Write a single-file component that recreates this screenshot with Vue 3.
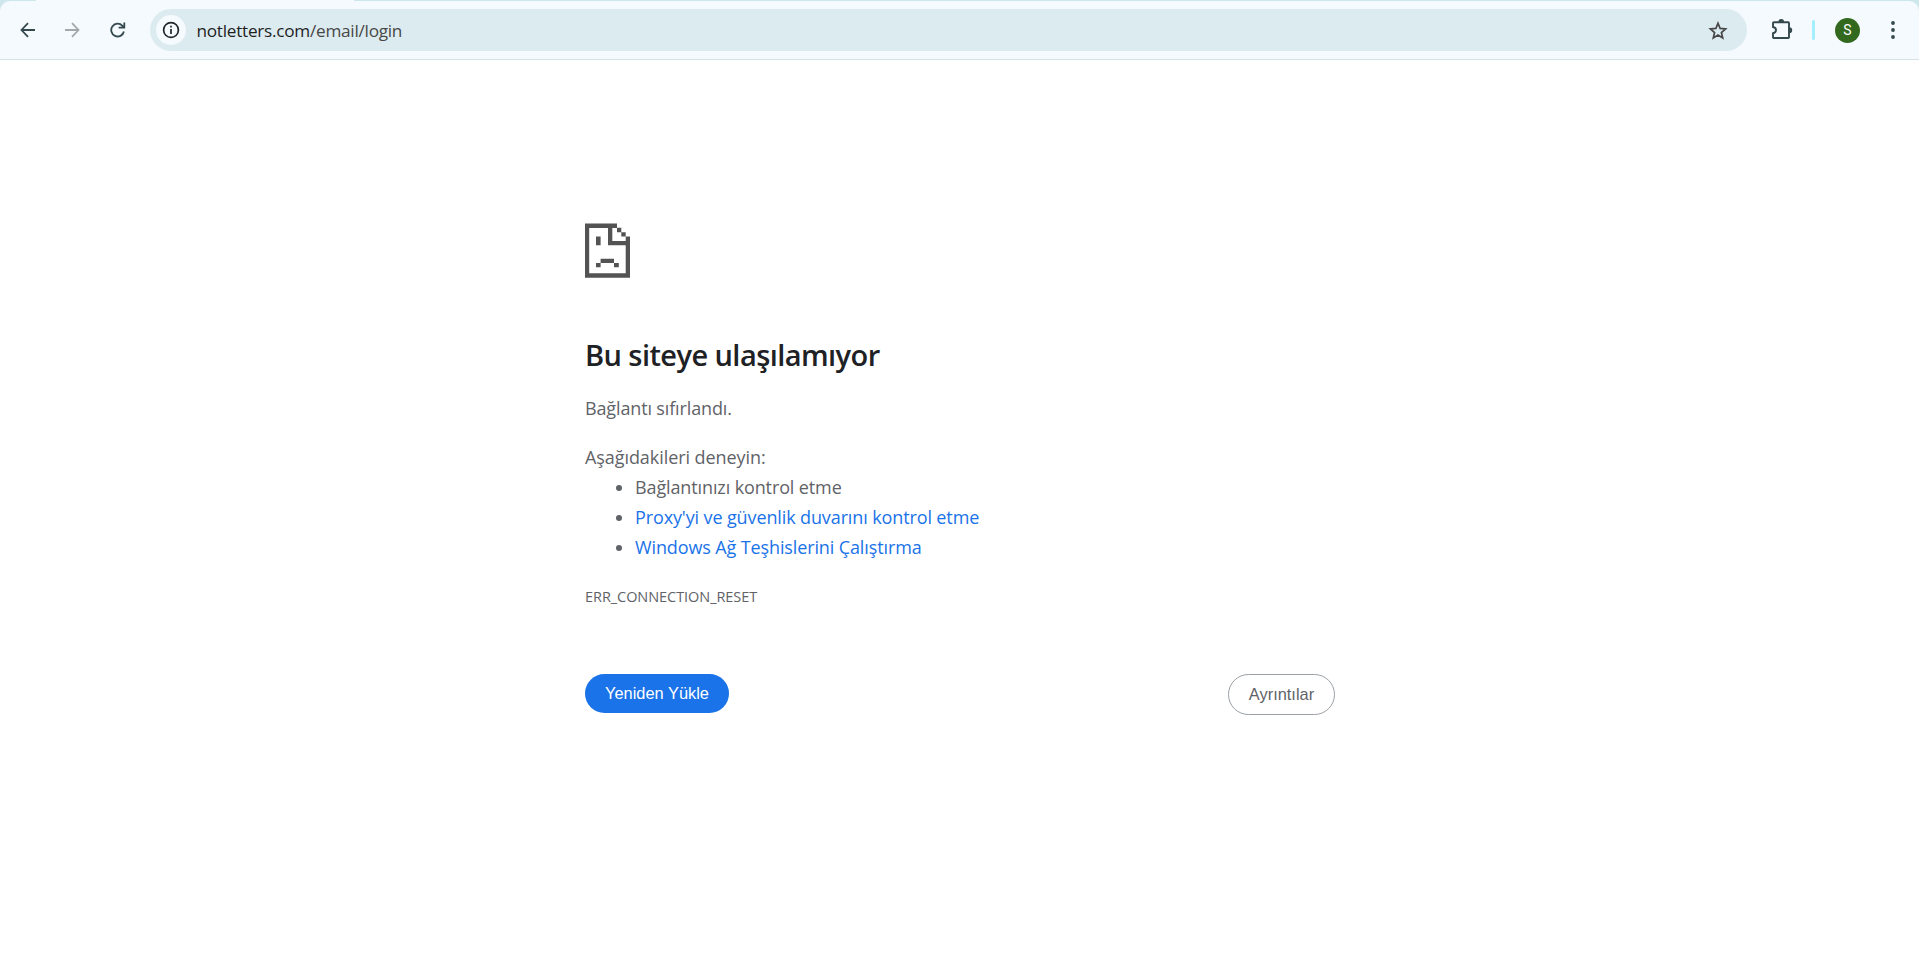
<template>
  <div class="browser">
    <!-- Tab strip edge -->
    <div class="strip">
      <div class="tab-edge"></div>
    </div>

    <!-- Toolbar -->
    <div class="toolbar-bg">
      <header class="toolbar">
        <nav class="nav">
          <button class="icon-btn" aria-label="Geri">
            <svg width="16" height="16" viewBox="0 0 16 16">
              <path d="M15 8H2M8 1.2L1.5 8L8 14.8" />
            </svg>
          </button>
          <button class="icon-btn disabled" aria-label="İleri">
            <svg width="16" height="16" viewBox="0 0 16 16">
              <path d="M0 8H13M7 1.2L13.5 8L7 14.8" />
            </svg>
          </button>
          <button class="icon-btn" aria-label="Yenile">
            <svg width="16" height="16" viewBox="0 0 16 16">
              <path d="M13.9 9.5A6.4 6.4 0 1 1 12.4 3.8L13.8 5.4M14.3 0.5V5.6H8.6" />
            </svg>
          </button>
        </nav>

        <div class="omnibox">
          <span class="site-info">
            <svg width="18" height="18" viewBox="0 0 18 18">
              <circle cx="9" cy="9" r="7.4" />
              <path d="M9 8V13M9 4.8V6.5" />
            </svg>
          </span>
          <span class="url"><b>{{ host }}</b>{{ path }}</span>
          <svg class="star" width="20" height="20" viewBox="0 0 20 20">
            <path d="M10 2.3L12.1 7.4L17.6 7.9L13.4 11.5L14.7 16.9L10 14L5.3 16.9L6.6 11.5L2.4 7.9L7.9 7.4Z" />
          </svg>
        </div>

        <div class="actions">
          <svg class="puzzle" width="22" height="22" viewBox="0 0 22 22">
            <path class="line" d="M3 3.3H17.3Q18 3.3 18 4V18.3Q18 19 17.3 19H2.7Q2 19 2 18.3V14.3Q5 13.8 5 11.1Q5 8.5 2 8V4Q2 3.3 3 3.3Z" />
            <path class="fill" d="M7.3 3A2.9 2.9 0 0 1 13.1 3ZM18.3 8.3A2.9 2.9 0 0 1 18.3 14.1Z" />
          </svg>
          <span class="divider"></span>
          <span class="avatar">S</span>
          <svg class="dots" width="4" height="18" viewBox="0 0 4 18">
            <circle cx="2" cy="2" r="1.9" />
            <circle cx="2" cy="9" r="1.9" />
            <circle cx="2" cy="16" r="1.9" />
          </svg>
        </div>
      </header>
    </div>

    <!-- Error page -->
    <main class="error">
      <svg class="sad" width="45" height="55" viewBox="0 0 45 55">
        <path d="M0 0.5H32V5H27.3V18H45V54.7H0ZM4.2 5V50.3H40.7V22.3H23V5Z" fill-rule="evenodd" />
        <path d="M40.7 13.6H45V19H40.7ZM32 4.8H36.3V9.2H32ZM36.3 9.2H40.7V13.6H36.3Z" />
        <path d="M11 13.6H15.6V22.3H11ZM15.6 35.8H29V40H15.6ZM11 40H15.6V44.3H11ZM29 40H33.8V44.3H29Z" />
      </svg>

      <h1>Bu siteye ulaşılamıyor</h1>
      <p class="summary">Bağlantı sıfırlandı.</p>

      <div class="suggestions">
        <p class="try">Aşağıdakileri deneyin:</p>
        <ul>
          <li v-for="s in suggestions" :key="s.text">
            <a v-if="s.link" href="#" @click.prevent>{{ s.text }}</a>
            <span v-else>{{ s.text }}</span>
          </li>
        </ul>
      </div>

      <div class="code">ERR_CONNECTION_RESET</div>

      <div class="buttons">
        <button class="reload">Yeniden Yükle</button>
        <button class="details">Ayrıntılar</button>
      </div>
    </main>
  </div>
</template>

<script setup>
const host = "notletters.com";
const path = "/email/login";

const suggestions = [
  { text: "Bağlantınızı kontrol etme", link: false },
  { text: "Proxy'yi ve güvenlik duvarını kontrol etme", link: true },
  { text: "Windows Ağ Teşhislerini Çalıştırma", link: true },
];
</script>

<style>
body {
  background: #fff;
  overflow: hidden;
}
</style>

<style scoped>
.browser {
  height: 963px;
  font-family: "Open Sans", "Noto Sans", sans-serif;
  color: #5f6368;
}
button {
  border: 0;
  padding: 0;
  background: none;
  cursor: pointer;
}

.strip {
  height: 1px;
  padding-left: 36px;
  background: #cde7ed;
}
.tab-edge {
  width: 318px;
  height: 1px;
  background: #f4fafd;
}
.toolbar-bg {
  background: #cde7ed;
}
.toolbar {
  box-sizing: border-box;
  height: 59px;
  padding: 8px 19px 8px 20px;
  display: flex;
  align-items: flex-start;
  background: #f4fafd;
  border-bottom: 1px solid #d5e2e6;
  border-radius: 10px 10px 0 0;
}

.nav {
  display: flex;
  gap: 29px;
  margin-top: 12.5px;
  width: 130px;
}
.icon-btn {
  width: 16px;
  height: 16px;
  display: block;
}
.icon-btn svg {
  display: block;
  fill: none;
  stroke: #34494e;
  stroke-width: 1.8;
}
.icon-btn.disabled svg {
  stroke: #a3a9ab;
}

.omnibox {
  box-sizing: border-box;
  width: 1597px;
  height: 42px;
  padding: 0 19px 0 6px;
  display: flex;
  align-items: center;
  border-radius: 21px;
  background: #dcebef;
}
.site-info {
  width: 30px;
  height: 30px;
  display: flex;
  align-items: center;
  justify-content: center;
  border-radius: 50%;
  background: #f4fafd;
}
.site-info svg {
  fill: none;
  stroke: #1f2528;
  stroke-width: 1.7;
}
.url {
  margin: 1px 0 0 10.5px;
  flex: 1;
  font-size: 17.2px;
  line-height: 24px;
  letter-spacing: -0.26px;
  color: #474747;
}
.url b {
  font-weight: 400;
  color: #1f1f1f;
}
.star {
  margin-top: 1px;
  fill: none;
  stroke: #474747;
  stroke-width: 1.7;
}

.actions {
  display: flex;
  align-items: center;
  height: 42px;
  margin-left: 24px;
}
.puzzle .line {
  fill: none;
  stroke: #34494e;
  stroke-width: 1.9;
}
.puzzle .fill {
  fill: #34494e;
}
.divider {
  width: 3px;
  height: 20px;
  margin-left: 19px;
  border-radius: 1.5px;
  background: #a3effd;
}
.avatar {
  width: 25px;
  height: 25px;
  margin-left: 20px;
  border-radius: 50%;
  background: #33691e;
  color: #fff;
  font: 14px/25px Roboto, sans-serif;
  text-align: center;
}
.dots {
  margin-left: 30.5px;
  fill: #34494e;
}

.error {
  width: 750px;
  margin-left: 585px;
  padding-top: 163px;
  font-size: 18px;
  line-height: 30px;
}
.sad {
  display: block;
  fill: #535353;
}
h1 {
  margin: 59px 0 0;
  font-size: 29px;
  font-weight: 600;
  line-height: 36px;
  letter-spacing: -0.57px;
  color: #202124;
}
.summary {
  margin: 20px 0 0;
  letter-spacing: -0.14px;
}
.suggestions {
  margin-top: 19px;
}
.try {
  margin: 0;
  letter-spacing: -0.07px;
}
ul {
  margin: 0;
  padding: 0 0 0 50px;
}
li {
  letter-spacing: -0.12px;
}
a {
  color: #1a73e8;
  text-decoration: none;
}
.code {
  margin-top: 23px;
  font-size: 14.5px;
  line-height: 24px;
  letter-spacing: -0.06px;
}

.buttons {
  display: flex;
  justify-content: space-between;
  align-items: flex-start;
  margin-top: 65px;
}
.buttons button {
  box-sizing: border-box;
  border-radius: 20.5px;
  font-family: "Liberation Sans", Arial, sans-serif;
  font-size: 16.4px;
}
.reload {
  width: 144px;
  height: 39px;
  background: #1a73e8;
  color: #fff;
}
.details {
  width: 107px;
  height: 41px;
  border: 1px solid #9aa0a6 !important;
  color: #5f6368;
}
</style>
